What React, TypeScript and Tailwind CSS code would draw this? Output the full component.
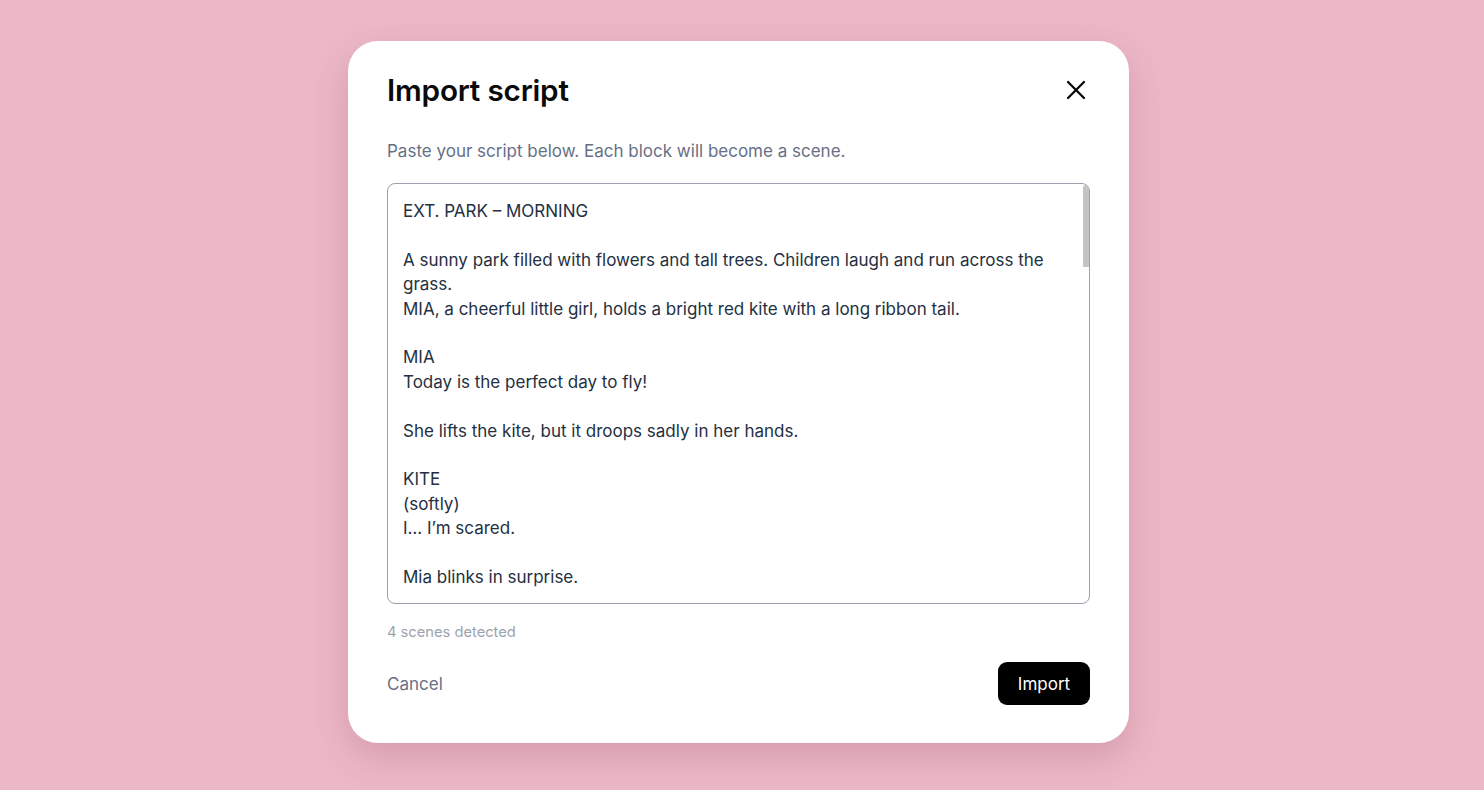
import React from "react";

const script = `EXT. PARK – MORNING

A sunny park filled with flowers and tall trees. Children laugh and run across the grass.
MIA, a cheerful little girl, holds a bright red kite with a long ribbon tail.

MIA
Today is the perfect day to fly!

She lifts the kite, but it droops sadly in her hands.

KITE
(softly)
I… I’m scared.

Mia blinks in surprise.

MIA
You can talk?

KITE
Only when I’m really, really nervous.

Mia kneels down and smooths the kite’s crumpled ribbon.

MIA
Everyone gets scared sometimes. We can be brave together.

The kite’s paper face wrinkles into a tiny smile.

EXT. PARK HILL – LATER

Mia climbs to the top of a grassy hill. The wind rustles the leaves above them.

KITE
It’s so high up here.

MIA
That’s what makes it fun! Hold on tight to your tail.

Mia starts to run. The kite bumps along the ground, then wobbles into the air.

KITE
(shouting)
Whoa! Whoa!

A gust of wind pulls the kite higher and higher.

MIA
You’re doing it! You’re flying!

EXT. SKY ABOVE THE PARK – CONTINUOUS

The kite soars above the treetops. Birds swoop around it, curious.

KITE
(laughing)
Look at me! I can see the whole park!

Below, Mia waves with both hands, the string wrapped around her wrist.

MIA (O.S.)
I knew you could do it!

A dark cloud drifts across the sun. The wind grows stronger.

KITE
Mia… the wind is pulling too hard!

EXT. PARK HILL – CONTINUOUS

Mia digs her heels into the grass and holds the string with all her strength.

MIA
Don’t worry! I won’t let go!

Slowly, carefully, she pulls the kite back down toward the hill.

The kite lands gently in her arms. Its ribbon tail flutters happily.

KITE
Thank you for not letting go.

MIA
That’s what friends do.

The cloud passes. Sunlight spills across the park once more.

Mia and the kite sit together on the hill, watching the sky.

KITE
Can we fly again tomorrow?

MIA
(smiling)
Every day, if you want.

FADE OUT.`;

export default function App() {
  return (
    <div
      className="min-h-[790px] w-full bg-[#ecb8c6] flex justify-center pt-[41px]"
      style={{ fontFamily: "Inter, 'Noto Sans', sans-serif" }}
    >
      <div className="mr-[7px] w-[781px] h-[702px] bg-white rounded-[30px] shadow-[0_14px_36px_rgba(120,40,70,0.2)] px-[39px] pt-[31px] pb-[38px] flex flex-col">
        <div className="flex items-center justify-between h-[36px]">
          <h1 className="text-[29.7px] leading-[36px] font-semibold text-[#0a0a0a] tracking-[-0.2px]">
            Import script
          </h1>
          <button className="w-[24px] h-[24px] flex items-center justify-center mr-[2px]" aria-label="Close">
            <svg width="24" height="24" viewBox="0 0 24 24" fill="none" stroke="#0a0a0a" strokeWidth="2.3" strokeLinecap="round">
              <path d="M4 4L20 20" />
              <path d="M20 4L4 20" />
            </svg>
          </button>
        </div>
        <p className="mt-[31px] text-[17px] leading-[24px] text-[#667085]">
          Paste your script below. Each block will become a scene.
        </p>
        <div className="relative mt-[20px] h-[421px] w-full">
          <textarea
            readOnly
            defaultValue={script}
            className="h-full w-full resize-none rounded-[8px] border border-[#9aa1ad] pl-[15px] pr-[16px] pt-[15px] pb-[14px] text-[17px] leading-[24.4px] text-[#243042] outline-none overflow-y-scroll [scrollbar-width:none] [&::-webkit-scrollbar]:hidden"
            style={{ fontFamily: "Inter, 'Noto Sans', sans-serif" }}
          />
          <div className="pointer-events-none absolute right-[1px] top-[2px] w-[6px] h-[82px] rounded-t-[3px] bg-[#c4c4c4]" />
        </div>
        <p className="mt-[18px] text-[14.7px] leading-[20px] text-[#9ca3af]">4 scenes detected</p>
        <div className="mt-[20px] flex items-center justify-between">
          <button className="text-[17px] leading-[24px] text-[#667085]">Cancel</button>
          <button className="h-[43px] w-[92px] rounded-[9px] bg-black text-white text-[17px] leading-[24px]">
            Import
          </button>
        </div>
      </div>
    </div>
  );
}
